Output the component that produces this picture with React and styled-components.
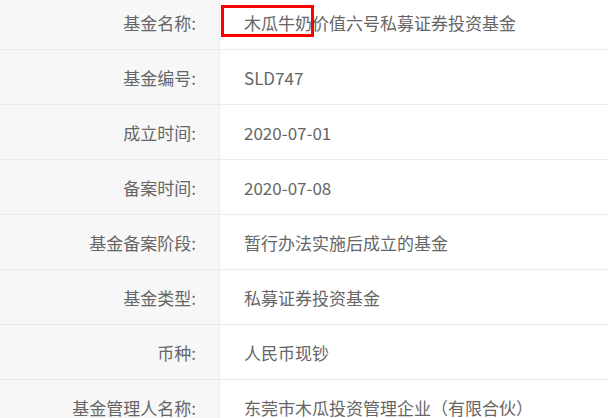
import React from "react";
import styled, { createGlobalStyle } from "styled-components";

const Global = createGlobalStyle`
  html, body { margin: 0; padding: 0; background: #fff; overflow: hidden; }
  body { font-family: "Noto Sans CJK SC", "Noto Sans", sans-serif; }
`;

const Table = styled.div`
  margin-top: -5px;
  width: 608px;
  display: flex;
  flex-direction: column;
`;

const Row = styled.div`
  display: grid;
  grid-template-columns: 220px 1fr;
  height: 55px;
  box-sizing: border-box;
  border-bottom: 1px solid #ebebeb;
`;

const Label = styled.div`
  background: #f7f7f7;
  border-right: 1px solid #ebebeb;
  display: flex;
  align-items: center;
  justify-content: flex-end;
  padding-right: 23px;
  color: #666;
  font-size: 17px;
  white-space: nowrap;
`;

const Value = styled.div`
  position: relative;
  display: flex;
  align-items: center;
  padding-left: 24px;
  color: #666;
  font-size: 17px;
  white-space: nowrap;
`;

const Highlight = styled.span`
  position: absolute;
  left: 1px;
  top: 10px;
  width: 93px;
  height: 32px;
  box-sizing: border-box;
  border: 3px solid #ff0000;
  pointer-events: none;
`;

const rows = [
  ["基金名称:", "木瓜牛奶价值六号私募证券投资基金", true],
  ["基金编号:", "SLD747"],
  ["成立时间:", "2020-07-01"],
  ["备案时间:", "2020-07-08"],
  ["基金备案阶段:", "暂行办法实施后成立的基金"],
  ["基金类型:", "私募证券投资基金"],
  ["币种:", "人民币现钞"],
  ["基金管理人名称:", "东莞市木瓜投资管理企业（有限合伙）"],
];

export default function App() {
  return (
    <>
      <Global />
      <Table>
        {rows.map(([l, v, hl]) => (
          <Row key={l}>
            <Label>{l}</Label>
            <Value>
              {v}
              {hl && <Highlight />}
            </Value>
          </Row>
        ))}
      </Table>
    </>
  );
}
